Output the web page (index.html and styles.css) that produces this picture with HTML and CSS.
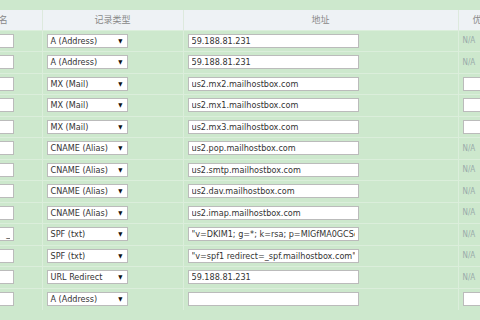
FILE: index.html
```html
<!DOCTYPE html>
<html lang="zh">
<head>
    <meta charset="UTF-8">
    <title>DNS 记录</title>
    <link rel="stylesheet" href="styles.css">
</head>
<body>
    <div class="dns-wrap">
        <table class="dns-table">
            <thead>
                <tr>
                    <th class="col-host">主机名</th>
                    <th class="col-type">记录类型</th>
                    <th class="col-addr">地址</th>
                    <th class="col-prio">优先级</th>
                </tr>
            </thead>
            <tbody>
                <tr>
                    <td class="col-host"><input class="host-input" type="text" value=""></td>
                    <td class="col-type"><div class="fake-select">A (Address)<span class="arrow">&#9660;</span></div></td>
                    <td class="col-addr"><input class="addr-input" type="text" value="59.188.81.231"></td>
                    <td class="col-prio na">N/A</td>
                </tr>
                <tr>
                    <td class="col-host"><input class="host-input" type="text" value=""></td>
                    <td class="col-type"><div class="fake-select">A (Address)<span class="arrow">&#9660;</span></div></td>
                    <td class="col-addr"><input class="addr-input" type="text" value="59.188.81.231"></td>
                    <td class="col-prio na">N/A</td>
                </tr>
                <tr>
                    <td class="col-host"><input class="host-input" type="text" value=""></td>
                    <td class="col-type"><div class="fake-select">MX (Mail)<span class="arrow">&#9660;</span></div></td>
                    <td class="col-addr"><input class="addr-input" type="text" value="us2.mx2.mailhostbox.com"></td>
                    <td class="col-prio"><input class="prio-input" type="text" value=""></td>
                </tr>
                <tr>
                    <td class="col-host"><input class="host-input" type="text" value=""></td>
                    <td class="col-type"><div class="fake-select">MX (Mail)<span class="arrow">&#9660;</span></div></td>
                    <td class="col-addr"><input class="addr-input" type="text" value="us2.mx1.mailhostbox.com"></td>
                    <td class="col-prio"><input class="prio-input" type="text" value=""></td>
                </tr>
                <tr>
                    <td class="col-host"><input class="host-input" type="text" value=""></td>
                    <td class="col-type"><div class="fake-select">MX (Mail)<span class="arrow">&#9660;</span></div></td>
                    <td class="col-addr"><input class="addr-input" type="text" value="us2.mx3.mailhostbox.com"></td>
                    <td class="col-prio"><input class="prio-input" type="text" value=""></td>
                </tr>
                <tr>
                    <td class="col-host"><input class="host-input" type="text" value=""></td>
                    <td class="col-type"><div class="fake-select">CNAME (Alias)<span class="arrow">&#9660;</span></div></td>
                    <td class="col-addr"><input class="addr-input" type="text" value="us2.pop.mailhostbox.com"></td>
                    <td class="col-prio na">N/A</td>
                </tr>
                <tr>
                    <td class="col-host"><input class="host-input" type="text" value=""></td>
                    <td class="col-type"><div class="fake-select">CNAME (Alias)<span class="arrow">&#9660;</span></div></td>
                    <td class="col-addr"><input class="addr-input" type="text" value="us2.smtp.mailhostbox.com"></td>
                    <td class="col-prio na">N/A</td>
                </tr>
                <tr>
                    <td class="col-host"><input class="host-input" type="text" value=""></td>
                    <td class="col-type"><div class="fake-select">CNAME (Alias)<span class="arrow">&#9660;</span></div></td>
                    <td class="col-addr"><input class="addr-input" type="text" value="us2.dav.mailhostbox.com"></td>
                    <td class="col-prio na">N/A</td>
                </tr>
                <tr>
                    <td class="col-host"><input class="host-input" type="text" value=""></td>
                    <td class="col-type"><div class="fake-select">CNAME (Alias)<span class="arrow">&#9660;</span></div></td>
                    <td class="col-addr"><input class="addr-input" type="text" value="us2.imap.mailhostbox.com"></td>
                    <td class="col-prio na">N/A</td>
                </tr>
                <tr>
                    <td class="col-host"><input class="host-input" type="text" value="                   _d"></td>
                    <td class="col-type"><div class="fake-select">SPF (txt)<span class="arrow">&#9660;</span></div></td>
                    <td class="col-addr"><input class="addr-input" type="text" value="&quot;v=DKIM1; g=*; k=rsa; p=MIGfMA0GCSqGSIb3"></td>
                    <td class="col-prio na">N/A</td>
                </tr>
                <tr>
                    <td class="col-host"><input class="host-input" type="text" value=""></td>
                    <td class="col-type"><div class="fake-select">SPF (txt)<span class="arrow">&#9660;</span></div></td>
                    <td class="col-addr"><input class="addr-input" type="text" value="&quot;v=spf1 redirect=_spf.mailhostbox.com&quot;"></td>
                    <td class="col-prio na">N/A</td>
                </tr>
                <tr>
                    <td class="col-host"><input class="host-input" type="text" value=""></td>
                    <td class="col-type"><div class="fake-select">URL Redirect<span class="arrow">&#9660;</span></div></td>
                    <td class="col-addr"><input class="addr-input" type="text" value="59.188.81.231"></td>
                    <td class="col-prio na">N/A</td>
                </tr>
                <tr>
                    <td class="col-host"><input class="host-input" type="text" value=""></td>
                    <td class="col-type"><div class="fake-select">A (Address)<span class="arrow">&#9660;</span></div></td>
                    <td class="col-addr"><input class="addr-input" type="text" value=""></td>
                    <td class="col-prio"><input class="prio-input" type="text" value=""></td>
                </tr>
            </tbody>
        </table>
    </div>
</body>
</html>
```

FILE: styles.css
```css
* {
    margin: 0;
    padding: 0;
    box-sizing: border-box;
}

body {
    background: #cde8cd;
    font-family: 'DejaVu Sans Condensed', 'DejaVu Sans', 'Noto Sans CJK SC', sans-serif;
    font-stretch: condensed;
    font-size: 9px;
    color: #333;
    overflow: hidden;
    padding-top: 10px;
}

.dns-wrap {
    margin-left: -53px;
    width: 567px;
}

.dns-table {
    border-collapse: collapse;
    table-layout: fixed;
    width: 567px;
}

.dns-table th {
    background: #eef2f5;
    color: #888;
    font-weight: normal;
    font-size: 9px;
    height: 20px;
    text-align: center;
    border-right: 1px solid #dde9dd;
    font-family: 'Noto Sans CJK SC', sans-serif;
}

.dns-table td {
    height: 21.5px;
    border-top: 1px solid #dbeedb;
    border-right: 1px solid #dbeedb;
    vertical-align: middle;
}

.col-host { width: 95px; }
.col-type { width: 141px; padding-left: 4px; }
.col-addr { width: 275px; padding-left: 4px; }
.col-prio { width: 56px; padding-left: 4px; }

th.col-type, th.col-addr, th.col-prio { padding-left: 0; }

.dns-table td.col-host {
    padding-left: 0;
    text-align: right;
    padding-right: 28px;
}

input {
    font-family: 'DejaVu Sans Condensed', 'DejaVu Sans', sans-serif;
    font-stretch: condensed;
    font-size: 9px;
    color: #333;
    height: 14px;
    border: 1px solid #bbb;
    background: #fff;
    padding: 0 3px;
    outline: none;
    display: block;
}

.host-input {
    width: 60px;
    margin-left: auto;
}

.addr-input {
    width: 171px;
}

.prio-input {
    width: 40px;
}

.fake-select {
    width: 81px;
    height: 14px;
    border: 1px solid #bbb;
    background: #fff;
    padding: 0 3px;
    line-height: 12px;
    display: flex;
    justify-content: space-between;
    align-items: center;
    color: #333;
    white-space: nowrap;
}

.arrow {
    font-size: 6px;
    color: #111;
    padding-right: 1px;
}

.na {
    color: #9aa;
    font-size: 8px;
}
```
